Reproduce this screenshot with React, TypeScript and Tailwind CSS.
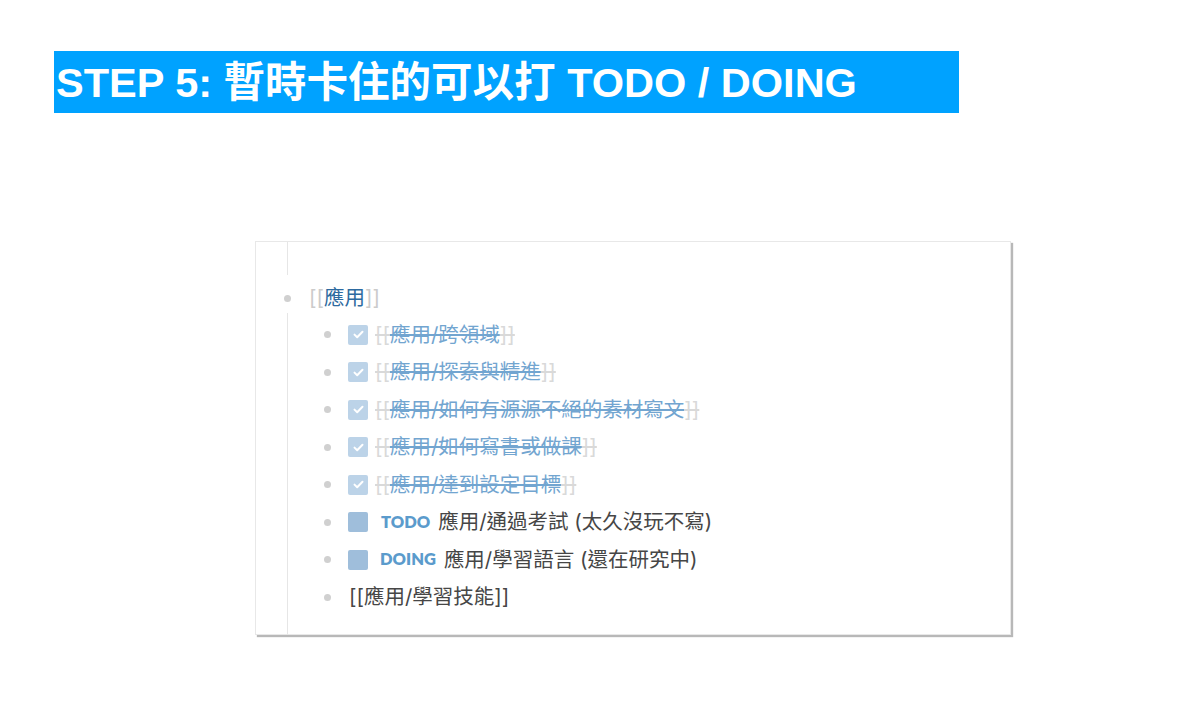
import React from 'react';

const textFont = { fontFamily: 'Inter, "Noto Sans CJK TC", sans-serif' };

const doneItems = [
  '應用/跨領域',
  '應用/探索與精進',
  '應用/如何有源源不絕的素材寫文',
  '應用/如何寫書或做課',
  '應用/達到設定目標',
];

const Bullet: React.FC = () => (
  <span className="block w-[7px] h-[7px] rounded-full bg-[#d0d0d0] shrink-0" />
);

const CheckedBox: React.FC = () => (
  <span className="flex items-center justify-center w-[20px] h-[20px] rounded-[2px] bg-[#bcd3e8] shrink-0">
    <svg width="11" height="9" viewBox="0 0 11 9" fill="none">
      <path d="M1.5 4.6 L4.2 7.2 L9.5 1.8" stroke="#ffffff" strokeWidth="2" strokeLinecap="round" strokeLinejoin="round" />
    </svg>
  </span>
);

const EmptyBox: React.FC = () => (
  <span className="block w-[20px] h-[20px] rounded-[2px] bg-[#9fbedb] shrink-0" />
);

const App: React.FC = () => {
  return (
    <div className="w-[1191px] h-[704px] bg-white pt-[51px] pl-[54px] overflow-hidden">
      <div
        className="w-[905px] h-[62px] bg-[#00a2ff] flex items-center pl-[2px] pt-[1px] text-white font-bold text-[41.5px] leading-none"
        style={{ fontFamily: '"Liberation Sans", "Noto Sans CJK TC", sans-serif' }}
      >
        STEP 5: 暫時卡住的可以打 TODO / DOING
      </div>

      <div
        className="mt-[128px] ml-[201px] w-[756px] h-[394px] bg-white border border-[#e8e8e8] shadow-[2px_2px_1px_rgba(0,0,0,0.28)] pl-[31px] text-[20.5px] text-[#464646]"
        style={textFont}
      >
        <div className="h-[33px] border-l border-[#e6e6e6]" />

        <div className="h-[38px] flex items-center pt-[8px] -ml-[3px]">
          <Bullet />
          <span className="ml-[18px] leading-none">
            <span className="text-[#cbcbcb]">[[</span>
            <span className="text-[#2d6aa0]">應用</span>
            <span className="text-[#cbcbcb]">]]</span>
          </span>
        </div>

        <div className="h-[322px] border-l border-[#e6e6e6] pt-[3px]">
          {doneItems.map((item) => (
            <div key={item} className="h-[37.5px] flex items-center pl-[36px]">
              <Bullet />
              <span className="ml-[17px]"><CheckedBox /></span>
              <span className="ml-[7px] leading-none">
                <span className="text-[#d9d9d9] line-through">[[</span>
                <span className="text-[#72a5d0] line-through">{item}</span>
                <span className="text-[#d9d9d9] line-through">]]</span>
              </span>
            </div>
          ))}

          <div className="h-[37.5px] flex items-center pl-[36px]">
            <Bullet />
            <span className="ml-[17px]"><EmptyBox /></span>
            <span className="ml-[13px] font-extrabold text-[16.5px] text-[#5b9bcc]" style={{ fontFamily: 'Lato, sans-serif' }}>TODO</span>
            <span className="ml-[8px] leading-none">應用/通過考試 (太久沒玩不寫)</span>
          </div>

          <div className="h-[37.5px] flex items-center pl-[36px]">
            <Bullet />
            <span className="ml-[17px]"><EmptyBox /></span>
            <span className="ml-[12px] font-extrabold text-[16.5px] text-[#5b9bcc]" style={{ fontFamily: 'Lato, sans-serif' }}>DOING</span>
            <span className="ml-[8px] leading-none">應用/學習語言 (還在研究中)</span>
          </div>

          <div className="h-[37.5px] flex items-center pl-[36px]">
            <Bullet />
            <span className="ml-[18px] leading-none">[[應用/學習技能]]</span>
          </div>
        </div>
      </div>
    </div>
  );
};

export default App;
